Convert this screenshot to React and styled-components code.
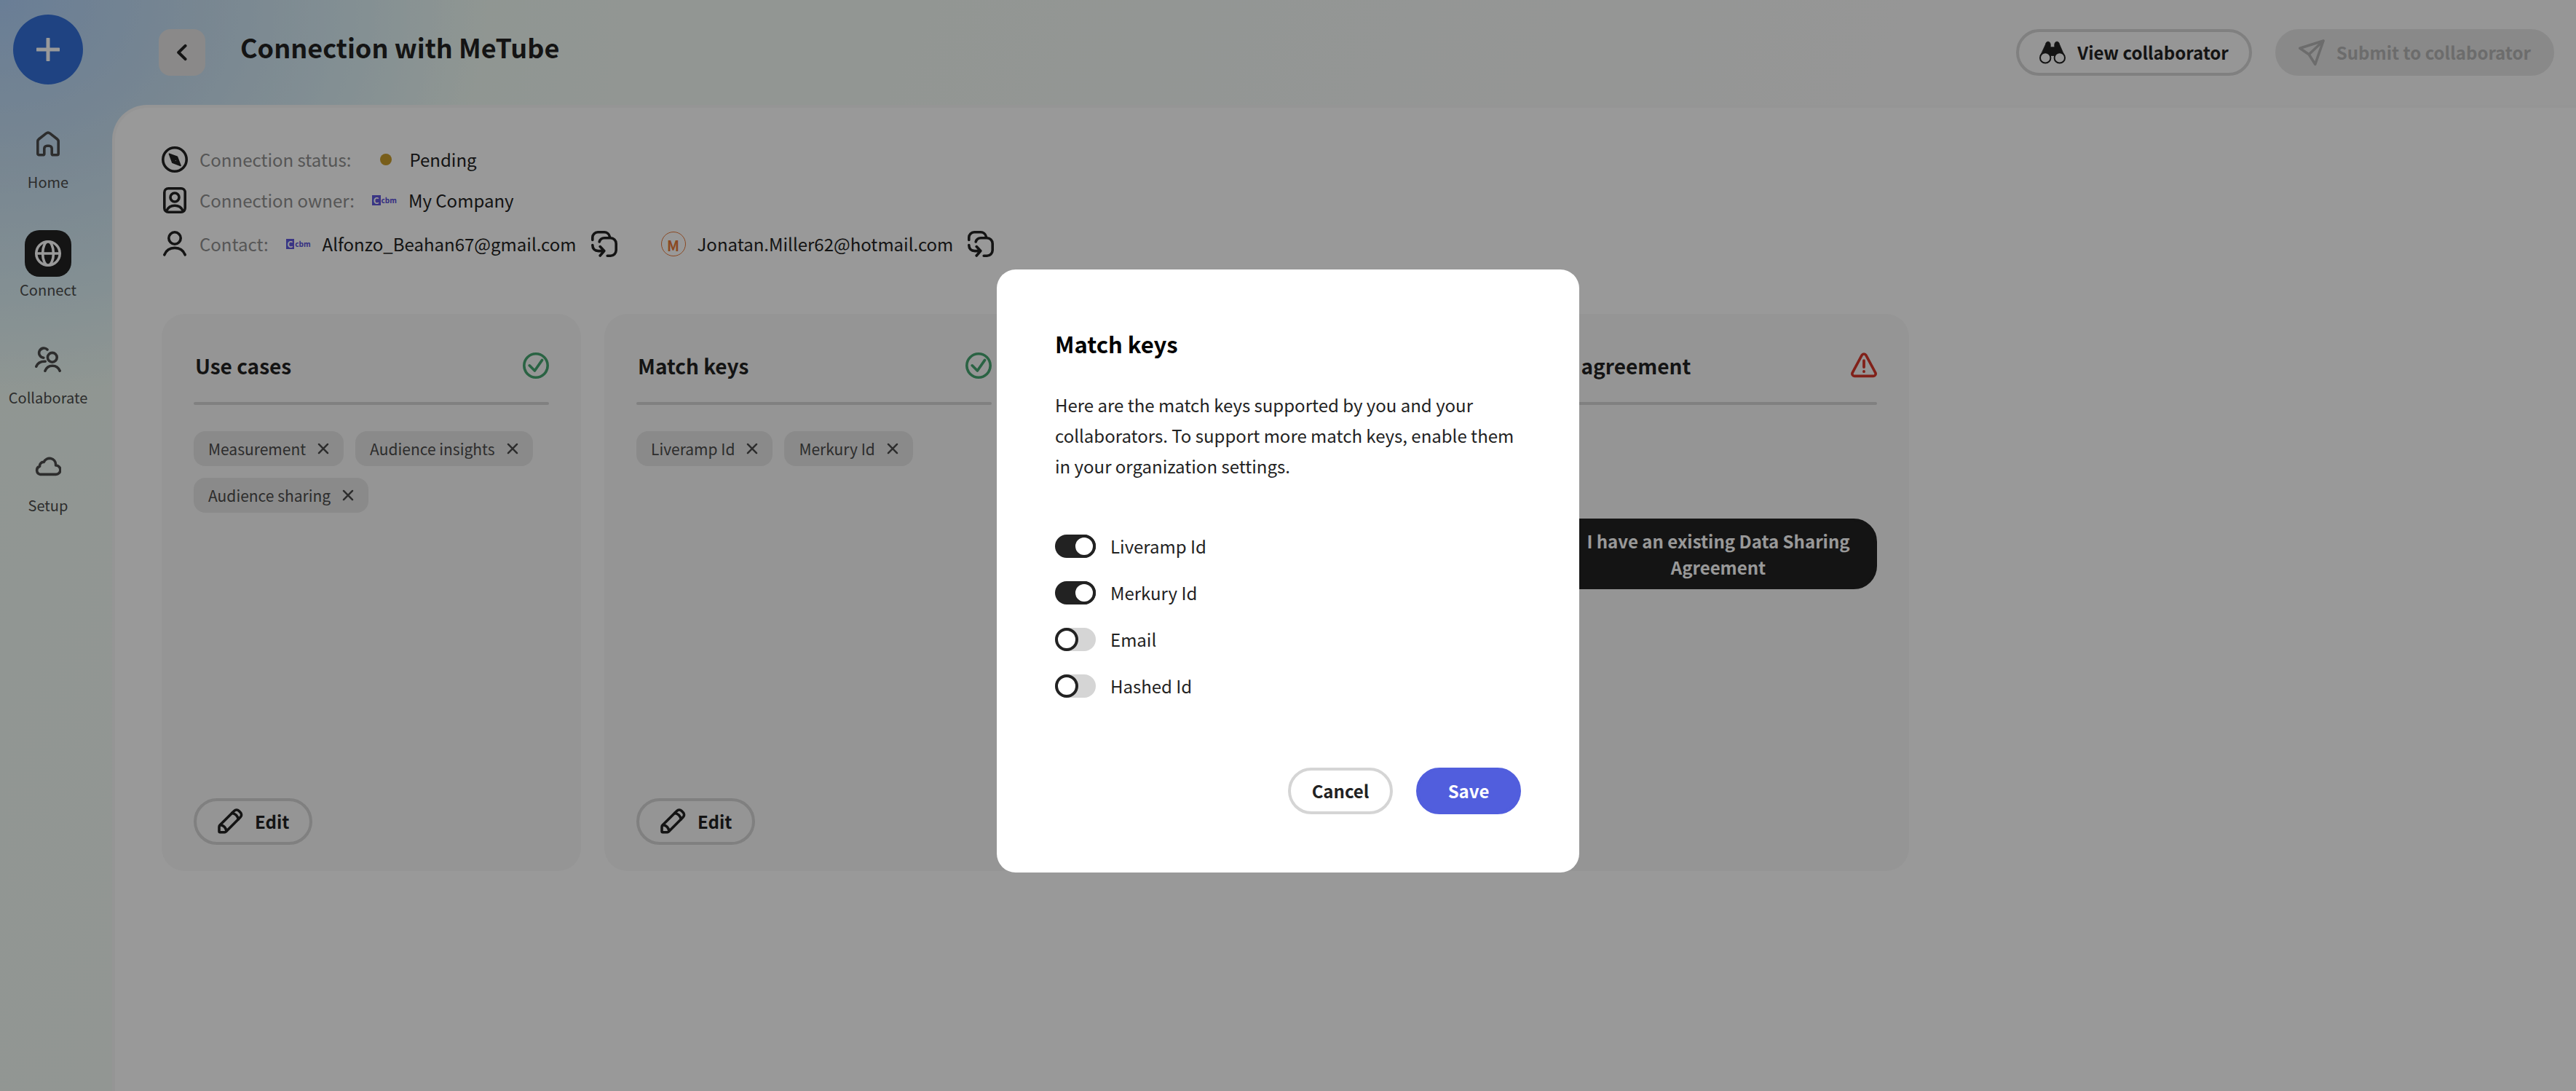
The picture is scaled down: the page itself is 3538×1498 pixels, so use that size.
import React, { useId, useState } from "react";
import styled, { createGlobalStyle } from "styled-components";

const GlobalStyle = createGlobalStyle`
  *, *::before, *::after { box-sizing: border-box; }
  body {
    margin: 0;
    font-family: "Noto Sans CJK SC", "Noto Sans", sans-serif;
    font-size: 24px;
    line-height: 36px;
    color: #222;
    background: #fafafa;
  }
  h1, h2, p, ul, dl, dd { margin: 0; padding: 0; }
  button { font: inherit; color: inherit; cursor: pointer; }
`;

/* ---------- icons ---------- */

const IconSvg = styled.svg`
  flex: none;
  width: ${({ $size }) => $size || 36}px;
  height: ${({ $size }) => $size || 36}px;
  color: ${({ $color }) => $color || "inherit"};
  fill: none;
  stroke: currentColor;
  stroke-width: 1.8;
  stroke-linecap: round;
  stroke-linejoin: round;
`;

const Icon = ({ children, size, color }) => (
  <IconSvg viewBox="1 1 18 18" $size={size} $color={color} aria-hidden="true">
    {children}
  </IconSvg>
);

const PlusIcon = () => (
  <Icon size={32}>
    <path d="M10 1.8v16.4M1.8 10h16.4" strokeWidth="2.8" />
  </Icon>
);
const HomeIcon = () => (
  <Icon>
    <path d="M17.1 8.200v8.300a.9.9 0 0 1-.9.9h-2.900a.7.7 0 0 1-.7-.7v-3.700a1.900 1.900 0 0 0-1.900-1.900H9.300a1.900 1.900 0 0 0-1.900 1.900v3.700a.7.7 0 0 1-.7.7H3.800a.9.9 0 0 1-.9-.9V8.200c0-.7.3-1.300.8-1.700l5-3.900a2 2 0 0 1 2.600 0l5 3.900c.5.4.8 1 .8 1.700z" />
  </Icon>
);
const GlobeIcon = () => (
  <Icon>
    <circle cx="10" cy="10" r="8.1" />
    <ellipse cx="10" cy="10" rx="3.700" ry="8.100" />
    <path d="M1.900 10h16.200" />
  </Icon>
);
const PeopleIcon = () => (
  <Icon>
    <circle cx="12.900" cy="8.400" r="3.200" />
    <path d="M8 17.600c.8-2.200 2.600-3.500 5-3.500s4.200 1.300 5.100 3.500" />
    <path d="M9.500 3A3.300 3.300 0 1 0 6.900 8.600" />
    <path d="M1.900 14.600c.8-2.200 2.900-3.600 6.200-3.500" />
  </Icon>
);
const CloudIcon = () => (
  <Icon>
    <path d="M15.400 14.700H4.700A2.900 2.900 0 0 1 4.300 9.100 2.600 2.600 0 0 1 7.100 6.200 4.300 4.300 0 0 1 15.300 7.900v.6a3.100 3.100 0 0 1 .1 6.200z" />
  </Icon>
);
const CompassIcon = () => (
  <Icon>
    <circle cx="10" cy="10" r="8.100" />
    <path
      d="M6.200 6.100l5.500 2 2.300 6.100-5.600-2.100zM10.900 9.700l-1.200 1.200 2 .8z"
      fill="currentColor"
      fillRule="evenodd"
      strokeWidth="0.800"
    />
  </Icon>
);
const BadgeIcon = () => (
  <Icon>
    <rect x="2.900" y="1.900" width="14.200" height="16.200" rx="2.700" />
    <circle cx="10" cy="8" r="3" />
    <path d="M4.400 17.200c1-2.400 3-3.600 5.600-3.600s4.600 1.200 5.600 3.600" />
  </Icon>
);
const PersonIcon = () => (
  <Icon>
    <circle cx="10" cy="6" r="4.100" />
    <path d="M2.900 17.400c1.200-3 3.900-4.700 7.100-4.700s5.900 1.700 7.100 4.700" />
  </Icon>
);
const CopyToIcon = () => (
  <Icon>
    <path d="M1.900 7.200V5.500a3.600 3.600 0 0 1 3.600-3.600h4.300a3.900 3.900 0 0 1 3.900 3" />
    <path d="M6.600 8.500a3.600 3.600 0 0 1 3.500-2.600h4.200a3.800 3.800 0 0 1 3.800 3.800v4.600a3.800 3.800 0 0 1-3.800 3.800h-2.200" />
    <path d="M1.900 10.800c0 2.500 1.600 4 4.100 4h3.600M7.100 11.800l2.800 3-2.800 3.200" />
  </Icon>
);
const BinocularsIcon = () => (
  <Icon>
    <path
      d="M5.200 4.500C5.400 3.300 6 2.600 6.900 2.600s1.600.7 1.700 1.900v1.900h2.800V4.500c.1-1.200.8-1.900 1.700-1.900s1.500.7 1.700 1.900l3.500 8-4.500 1.500-2.600-1.800H8.800L6.200 14l-4.500-1.500z"
      fill="currentColor"
      strokeWidth="0.400"
    />
    <circle cx="5.100" cy="13.700" r="3.600" fill="#fafafa" strokeWidth="1" />
    <circle cx="14.900" cy="13.700" r="3.600" fill="#fafafa" strokeWidth="1" />
  </Icon>
);
const SendIcon = () => (
  <Icon>
    <path d="M18 2L1.900 7.100l6.200 4.300 4.300 6.700zM8.100 11.400L18 2" />
  </Icon>
);
const PencilIcon = () => (
  <Icon>
    <path d="M2.500 16.800v-3.100c0-.5.200-1 .6-1.300L12.800 2.700a2.300 2.300 0 0 1 3.300 0l1 1a2.300 2.300 0 0 1 0 3.300l-9.700 9.800c-.4.300-.8.600-1.300.6H3.100a.6.6 0 0 1-.6-.6z" />
    <path d="M11.400 4.200c2.200.4 3.800 2 4.300 4.300M3.400 12.400c2.300.3 3.600 1.700 4 4" />
  </Icon>
);
const CheckIcon = () => (
  <Icon color="#46a571">
    <circle cx="10" cy="10" r="8.100" />
    <path d="M5.600 9.900l3.600 3.600 5.100-7.300" />
  </Icon>
);
const AlertIcon = () => (
  <Icon color="#d7372b">
    <path d="M8.600 2.800a1.600 1.600 0 0 1 2.800 0l6.500 12.100a1.600 1.600 0 0 1-1.400 2.300h-13a1.600 1.600 0 0 1-1.400-2.300z" />
    <path d="M10 6.600v4.400M10 14v.1" strokeWidth="1.900" />
  </Icon>
);
const ChevronIcon = () => (
  <Icon size={24}>
    <path d="M13.400 3.200L6.400 10l7 6.800" strokeWidth="3" />
  </Icon>
);
const CrossIcon = () => (
  <Icon size={16}>
    <path d="M3.200 3.200l13.600 13.600M16.800 3.200L3.200 16.800" strokeWidth="2.800" />
  </Icon>
);

/* ---------- page frame ---------- */

const Page = styled.div`
  display: grid;
  grid-template-columns: 154px 1fr;
  min-height: 100vh;
  background:
    radial-gradient(ellipse 860px 700px at 0 0, #b0d2fa 0%, #c8e0f2 32%, #dcf0f6 58%, rgba(240, 251, 244, 0.9) 78%, rgba(250, 250, 250, 0) 100%),
    linear-gradient(115deg, #f1fbf6 0%, #f4faf6 30%, #fafafa 62%);
`;

const Sidebar = styled.nav`
  display: flex;
  flex-direction: column;
  align-items: center;
  width: 132px;
  padding-top: 20px;
`;

const AddButton = styled.button`
  display: grid;
  place-items: center;
  width: 96px;
  height: 96px;
  padding: 0;
  border: 0;
  border-radius: 50%;
  color: #fff;
  background: #3571d9;
`;

const NavList = styled.ul`
  display: flex;
  flex-direction: column;
  gap: 48px;
  margin-top: 52px;
  list-style: none;
`;

const NavLink = styled.a`
  display: flex;
  flex-direction: column;
  align-items: center;
  height: 100px;
  font-size: 20px;
  color: #4b4b4b;
  text-decoration: none;
`;

const NavIcon = styled.span`
  display: grid;
  place-items: center;
  width: 64px;
  height: 64px;
  padding-bottom: ${({ $active }) => ($active ? 0 : 4)}px;
  border-radius: 20px;
  color: ${({ $active }) => ($active ? "#fff" : "inherit")};
  background: ${({ $active }) => ($active ? "#222" : "transparent")};
`;

const Content = styled.div`
  display: flex;
  flex-direction: column;
  min-width: 0;
`;

const Header = styled.header`
  display: flex;
  align-items: flex-start;
  height: 144px;
  padding: 40px 30px 0 64px;
`;

const BackButton = styled.button`
  display: grid;
  place-items: center;
  width: 64px;
  height: 64px;
  padding: 0;
  border: 0;
  border-radius: 16px;
  background: #e6e4e4;
`;

const PageTitle = styled.h1`
  margin-left: 48px;
  font-size: 36px;
  line-height: 48px;
  font-weight: 700;
`;

const HeaderActions = styled.div`
  display: flex;
  gap: 32px;
  margin-left: auto;
`;

const fills = {
  outline: { bg: "transparent", border: "#d5d5d5", fg: "#222" },
  disabled: { bg: "#e5e5e5", border: "#e5e5e5", fg: "#b4b4b4" },
  accent: { bg: "#515edd", border: "#515edd", fg: "#fff" },
  dark: { bg: "#222", border: "#222", fg: "#fff" },
};

const Button = styled.button`
  display: inline-flex;
  align-items: center;
  justify-content: center;
  gap: 16px;
  min-height: 64px;
  padding: 0 28px;
  border: 4px solid ${({ $kind }) => fills[$kind].border};
  border-radius: 32px;
  font-weight: 700;
  color: ${({ $kind }) => fills[$kind].fg};
  background: ${({ $kind }) => fills[$kind].bg};
`;

const Panel = styled.main`
  flex: 1;
  padding: 51px 64px;
  border: 4px solid #f8f8f8;
  border-width: 4px 0 0 4px;
  border-radius: 48px 0 0 0;
  background: #fff;
`;

/* ---------- connection details ---------- */

const Details = styled.dl`
  display: flex;
  flex-direction: column;
  gap: 16px;
`;

const DetailRow = styled.div`
  display: flex;
  align-items: center;
  gap: 24px;
  min-height: ${({ $tall }) => ($tall ? 48 : 40)}px;
`;

const Term = styled.dt`
  display: flex;
  align-items: center;
  gap: 16px;
  color: #8f8f8f;

  svg { color: #222; }
`;

const Value = styled.dd`
  display: flex;
  align-items: center;
  gap: ${({ $gap }) => $gap || 16}px;
`;

const Contact = styled.dd`
  display: flex;
  align-items: center;
  gap: 16px;
  margin-right: 32px;
`;

const StatusDot = styled.span`
  width: 16px;
  height: 16px;
  margin-left: 16px;
  border-radius: 50%;
  background: #c99d2c;
`;

const Brand = styled.span`
  display: flex;
  align-items: center;
  gap: 1px;
  width: 34px;
  font-size: 10px;
  line-height: 14px;
  font-weight: 700;
  color: #554dd8;
`;

const BrandMark = styled.span`
  width: 13px;
  height: 14px;
  font-size: 12px;
  text-align: center;
  color: #fff;
  background: #5f58dd;
`;

const Monogram = styled.span`
  display: grid;
  place-items: center;
  width: 34px;
  height: 34px;
  border: 1px solid #e8793a;
  border-radius: 50%;
  font-size: 20px;
  font-weight: 700;
  color: #e8793a;
`;

const IconButton = styled.button`
  display: flex;
  padding: 0 4px;
  border: 0;
  background: none;
`;

const CompanyLogo = () => (
  <Brand>
    <BrandMark>C</BrandMark>cbm
  </Brand>
);

/* ---------- cards ---------- */

const CardGrid = styled.div`
  display: grid;
  grid-template-columns: repeat(4, 576px);
  gap: 32px;
  margin-top: 72px;
`;

const Card = styled.section`
  display: flex;
  flex-direction: column;
  min-height: 765px;
  padding: 51px 44px 36px;
  border-radius: 32px;
  background: #f8f8f8;
`;

const CardHeader = styled.header`
  display: flex;
  align-items: center;
  justify-content: space-between;
  padding-bottom: 30px;
`;

const CardTitle = styled.h2`
  padding-left: 2px;
  font-size: 28px;
  line-height: 40px;
  font-weight: 700;
  white-space: nowrap;
`;

const Divider = styled.div`
  flex: none;
  height: 4px;
  border-radius: 2px;
  background: #d5d5d5;
`;

const TagList = styled.ul`
  display: flex;
  flex-wrap: wrap;
  gap: 16px;
  margin-top: 36px;
  list-style: none;
`;

const Tag = styled.li`
  display: flex;
  align-items: center;
  gap: 16px;
  height: 48px;
  padding: 0 20px;
  border-radius: 16px;
  font-size: 21px;
  color: #4b4b4b;
  background: #e6e6e6;
`;

const TagRemove = styled.button`
  display: flex;
  padding: 0;
  border: 0;
  background: none;
`;

const CardFooter = styled.footer`
  margin-top: auto;
`;

const AgreementActions = styled.div`
  display: grid;
  margin-top: 156px;

  button { min-height: 97px; }
`;

function TagCard({ title, tags }) {
  return (
    <Card>
      <CardHeader>
        <CardTitle>{title}</CardTitle>
        <CheckIcon />
      </CardHeader>
      <Divider />
      <TagList>
        {tags.map((tag) => (
          <Tag key={tag}>
            {tag}
            <TagRemove type="button" aria-label={`Remove ${tag}`}>
              <CrossIcon />
            </TagRemove>
          </Tag>
        ))}
      </TagList>
      <CardFooter>
        <Button type="button" $kind="outline">
          <PencilIcon />
          Edit
        </Button>
      </CardFooter>
    </Card>
  );
}

/* ---------- dialog ---------- */

const Backdrop = styled.div`
  position: fixed;
  inset: 0;
  display: grid;
  place-items: center;
  padding-top: 70px;
  background: rgba(0, 0, 0, 0.4);
`;

const Dialog = styled.div`
  width: 800px;
  padding: 80px;
  border-radius: 26px;
  background: #fff;
`;

const DialogTitle = styled.h2`
  font-size: 31px;
  line-height: 44px;
  font-weight: 700;
  color: #000;
`;

const DialogText = styled.p`
  margin-top: 41px;
  line-height: 42px;
`;

const ToggleList = styled.div`
  display: grid;
  gap: 24px;
  margin-top: 69px;
`;

const ToggleLabel = styled.label`
  display: flex;
  align-items: center;
  gap: 20px;
  height: 40px;
`;

const Toggle = styled.input`
  appearance: none;
  display: flex;
  width: 56px;
  height: 32px;
  margin: 0;
  border-radius: 16px;
  background: #d5d5d5;

  &::before {
    content: "";
    width: 32px;
    height: 32px;
    border: 4px solid #222;
    border-radius: 50%;
    background: #fff;
  }

  &:checked {
    justify-content: flex-end;
    background: #222;
  }
`;

const DialogActions = styled.div`
  display: flex;
  justify-content: flex-end;
  gap: 32px;
  margin-top: 92px;

  button { min-width: 144px; }
`;

function KeyToggle({ name, on }) {
  const id = useId();
  const [checked, setChecked] = useState(on);
  return (
    <ToggleLabel htmlFor={id}>
      <Toggle
        id={id}
        type="checkbox"
        role="switch"
        checked={checked}
        onChange={(e) => setChecked(e.target.checked)}
      />
      {name}
    </ToggleLabel>
  );
}

const navItems = [
  { label: "Home", icon: HomeIcon },
  { label: "Connect", icon: GlobeIcon, active: true },
  { label: "Collaborate", icon: PeopleIcon },
  { label: "Setup", icon: CloudIcon },
];

const matchKeys = [
  { name: "Liveramp Id", on: true },
  { name: "Merkury Id", on: true },
  { name: "Email", on: false },
  { name: "Hashed Id", on: false },
];

export default function App() {
  return (
    <>
      <GlobalStyle />
      <Page>
        <Sidebar aria-label="Main">
          <AddButton type="button" aria-label="Add">
            <PlusIcon />
          </AddButton>
          <NavList>
            {navItems.map(({ label, icon: Glyph, active }) => (
              <li key={label}>
                <NavLink href="#" aria-current={active ? "page" : undefined}>
                  <NavIcon $active={active}>
                    <Glyph />
                  </NavIcon>
                  {label}
                </NavLink>
              </li>
            ))}
          </NavList>
        </Sidebar>

        <Content>
          <Header>
            <BackButton type="button" aria-label="Back">
              <ChevronIcon />
            </BackButton>
            <PageTitle>Connection with MeTube</PageTitle>
            <HeaderActions>
              <Button type="button" $kind="outline">
                <BinocularsIcon />
                View collaborator
              </Button>
              <Button type="button" $kind="disabled" disabled>
                <SendIcon />
                Submit to collaborator
              </Button>
            </HeaderActions>
          </Header>

          <Panel>
            <Details>
              <DetailRow>
                <Term>
                  <CompassIcon />
                  Connection status:
                </Term>
                <Value $gap={24}>
                  <StatusDot />
                  Pending
                </Value>
              </DetailRow>
              <DetailRow>
                <Term>
                  <BadgeIcon />
                  Connection owner:
                </Term>
                <Value>
                  <CompanyLogo />
                  My Company
                </Value>
              </DetailRow>
              <DetailRow $tall>
                <Term>
                  <PersonIcon />
                  Contact:
                </Term>
                <Contact>
                  <CompanyLogo />
                  Alfonzo_Beahan67@gmail.com
                  <IconButton type="button" aria-label="Copy Alfonzo's email">
                    <CopyToIcon />
                  </IconButton>
                </Contact>
                <Contact>
                  <Monogram>M</Monogram>
                  Jonatan.Miller62@hotmail.com
                  <IconButton type="button" aria-label="Copy Jonatan's email">
                    <CopyToIcon />
                  </IconButton>
                </Contact>
              </DetailRow>
            </Details>

            <CardGrid>
              <TagCard
                title="Use cases"
                tags={["Measurement", "Audience insights", "Audience sharing"]}
              />
              <TagCard title="Match keys" tags={["Liveramp Id", "Merkury Id"]} />
              <Card />
              <Card>
                <CardHeader>
                  <CardTitle>Legal agreement</CardTitle>
                  <AlertIcon />
                </CardHeader>
                <Divider />
                <AgreementActions>
                  <Button type="button" $kind="dark">
                    <CheckIcon />
                    I have an existing Data Sharing Agreement
                  </Button>
                </AgreementActions>
              </Card>
            </CardGrid>
          </Panel>
        </Content>
      </Page>

      <Backdrop>
        <Dialog role="dialog" aria-modal="true" aria-labelledby="match-keys-title">
          <DialogTitle id="match-keys-title">Match keys</DialogTitle>
          <DialogText>
            Here are the match keys supported by you and your collaborators. To
            support more match keys, enable them in your organization settings.
          </DialogText>
          <ToggleList>
            {matchKeys.map((key) => (
              <KeyToggle key={key.name} {...key} />
            ))}
          </ToggleList>
          <DialogActions>
            <Button type="button" $kind="outline">
              Cancel
            </Button>
            <Button type="button" $kind="accent">
              Save
            </Button>
          </DialogActions>
        </Dialog>
      </Backdrop>
    </>
  );
}
